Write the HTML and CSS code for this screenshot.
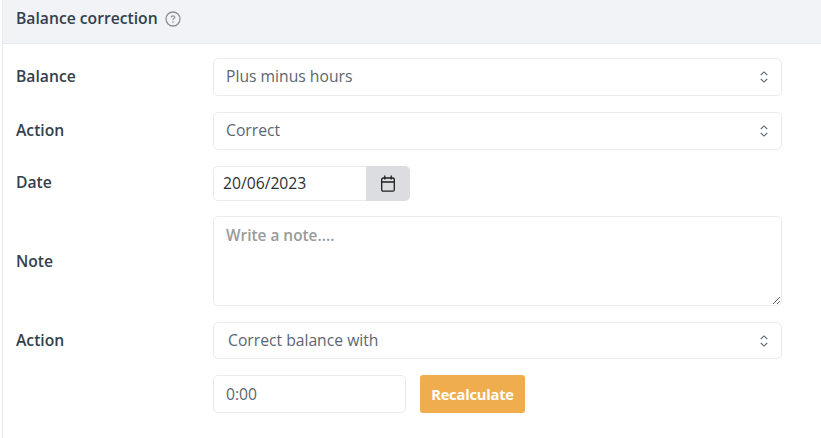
FILE: index.html
```html
<!DOCTYPE html>
<html lang="en">
<head>
  <meta charset="UTF-8" />
  <title>Balance correction</title>
  <link rel="stylesheet" href="styles.css">
</head>
<body>
  <div class="card">
    <div class="card-head">
      <span>Balance correction</span>
      <svg class="help" width="16" height="16" viewBox="0 0 16 16" fill="none">
        <circle cx="8" cy="8" r="7" stroke="#8b8f94" stroke-width="1.3"/>
        <path d="M6.2 6.4c0-1 .8-1.6 1.8-1.6s1.8.6 1.8 1.5c0 1.3-1.8 1.4-1.8 2.7" stroke="#8b8f94" stroke-width="1.2"/>
        <circle cx="8" cy="11.1" r=".8" fill="#8b8f94"/>
      </svg>
    </div>

    <div class="card-body">
      <div class="row row-select">
        <label>Balance</label>
        <div class="select-wrap">
          <select class="control"><option>Plus minus hours</option></select>
          <svg class="updown" width="8" height="12" viewBox="0 0 8 12" fill="none"><path d="M.8 4 4 .9 7.2 4M.8 8 4 11.1 7.2 8" stroke="#5b6976" stroke-width="1.1"/></svg>
        </div>
      </div>

      <div class="row row-select">
        <label>Action</label>
        <div class="select-wrap">
          <select class="control"><option>Correct</option></select>
          <svg class="updown" width="8" height="12" viewBox="0 0 8 12" fill="none"><path d="M.8 4 4 .9 7.2 4M.8 8 4 11.1 7.2 8" stroke="#5b6976" stroke-width="1.1"/></svg>
        </div>
      </div>

      <div class="row row-date">
        <label>Date</label>
        <div class="date-group">
          <input class="date-input" type="text" value="20/06/2023">
          <span class="date-btn">
            <svg width="14" height="17" viewBox="0 0 14 17" fill="none">
              <rect x=".7" y="3" width="12.6" height="13.2" rx="1.5" stroke="#1f1f1f" stroke-width="1.3"/>
              <path d="M.7 7h12.6M3.8 .6v4M10.2 .6v4" stroke="#1f1f1f" stroke-width="1.3"/>
            </svg>
          </span>
        </div>
      </div>

      <div class="row row-note">
        <label>Note</label>
        <textarea class="control note" placeholder="Write a note...."></textarea>
      </div>

      <div class="row row-action">
        <label>Action</label>
        <div class="select-wrap">
          <select class="control wide-pad"><option>Correct balance with</option></select>
          <svg class="updown" width="8" height="12" viewBox="0 0 8 12" fill="none"><path d="M.8 4 4 .9 7.2 4M.8 8 4 11.1 7.2 8" stroke="#5b6976" stroke-width="1.1"/></svg>
        </div>
      </div>

      <div class="row row-recalc">
        <span></span>
        <div class="recalc">
          <input class="control hours" type="text" value="0:00">
          <button class="btn-recalc">Recalculate</button>
        </div>
      </div>
    </div>
  </div>
</body>
</html>
```

FILE: styles.css
```css
html, body {
  margin: 0;
  padding: 0;
  height: 100%;
  background: #fff;
  font-family: 'Open Sans', sans-serif;
  overflow: hidden;
}

.card {
  margin-left: 2px;
  width: 830px;
  height: 438px;
  border-left: 1px solid #e9ebee;
}

.card-head {
  display: flex;
  align-items: center;
  gap: 6px;
  padding: 0 0 7px 13px;
  box-sizing: border-box;
  height: 44px;
  background: #f1f3f7;
  border-bottom: 1px solid #e8eaee;
  color: #333f4d;
  font-size: 15.7px;
  font-weight: 600;
}

.help {
  margin: 2px 0 0 1px;
}

.card-body {
  padding: 14px 0 0 13px;
}

.row {
  display: grid;
  grid-template-columns: 197px 569px;
  align-items: center;
  margin-bottom: 16px;
}

.row label {
  color: #333f4d;
  font-size: 15.7px;
  font-weight: 600;
  padding-bottom: 2px;
}

.row-date label {
  padding-bottom: 3px;
}

.row-note label {
  padding-bottom: 0;
}

.control {
  display: block;
  width: 100%;
  box-sizing: border-box;
  background: #fff;
  border: 1px solid #e9ebee;
  border-radius: 5px;
  color: #5c6670;
  font-family: inherit;
  font-size: 15.7px;
  outline: none;
}

.select-wrap {
  position: relative;
}

select.control {
  appearance: none;
  height: 38px;
  padding: 0 30px 2px 12px;
}

select.wide-pad {
  height: 37px;
  padding-left: 14px;
}

.updown {
  position: absolute;
  right: 14px;
  top: 50%;
  transform: translateY(-50%);
  pointer-events: none;
}

.row-date {
  margin-bottom: 15px;
}

.date-group {
  display: flex;
  width: 197px;
  height: 35px;
}

.date-input {
  width: 153px;
  box-sizing: border-box;
  padding: 0 0 1px 9px;
  border: 1px solid #e9ebee;
  border-right: 0;
  border-radius: 5px 0 0 5px;
  color: #2b2f33;
  font-family: inherit;
  font-size: 15.7px;
  outline: none;
}

.date-btn {
  display: flex;
  align-items: center;
  justify-content: center;
  width: 44px;
  background: #dcdde0;
  border-radius: 0 5px 5px 0;
}

.note {
  height: 90px;
  padding: 8px 12px;
  resize: both;
}

.note::placeholder {
  color: #9a9a9a;
  font-weight: 600;
  font-size: 15.4px;
  opacity: 1;
}

.recalc {
  display: flex;
  gap: 14px;
}

.hours {
  width: 193px;
  height: 38px;
  padding: 0 12px;
}

.btn-recalc {
  width: 105px;
  height: 38px;
  padding: 0;
  background: #f0ad4e;
  border: 0;
  border-radius: 3px;
  color: #fff;
  font-family: inherit;
  font-size: 14.7px;
  font-weight: 700;
  letter-spacing: -0.2px;
}
```
